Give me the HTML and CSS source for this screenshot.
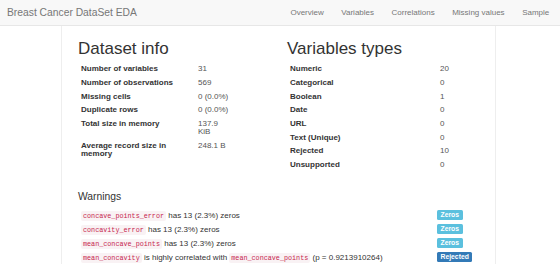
FILE: index.html
```html
<!DOCTYPE html>
<html lang="en">
<head>
    <meta charset="UTF-8">
    <meta name="viewport" content="width=device-width, initial-scale=1.0">
    <title>Breast Cancer DataSet EDA</title>
    <link rel="stylesheet" href="styles.css">
</head>
<body>
    <nav class="navbar">
        <span class="brand">Breast Cancer DataSet EDA</span>
        <ul class="nav-links">
            <li>Overview</li>
            <li>Variables</li>
            <li>Correlations</li>
            <li>Missing values</li>
            <li>Sample</li>
        </ul>
    </nav>

    <div class="container">
        <div class="overview">
            <div class="col">
                <h1>Dataset info</h1>
                <table class="stats info">
                    <tr><th>Number of variables</th><td>31</td></tr>
                    <tr><th>Number of observations</th><td>569</td></tr>
                    <tr><th>Missing cells</th><td>0 (0.0%)</td></tr>
                    <tr><th>Duplicate rows</th><td>0 (0.0%)</td></tr>
                    <tr><th>Total size in memory</th><td>137.9 KiB</td></tr>
                    <tr><th>Average record size in memory</th><td>248.1 B</td></tr>
                </table>
            </div>
            <div class="col">
                <h1>Variables types</h1>
                <table class="stats types">
                    <tr><th>Numeric</th><td>20</td></tr>
                    <tr><th>Categorical</th><td>0</td></tr>
                    <tr><th>Boolean</th><td>1</td></tr>
                    <tr><th>Date</th><td>0</td></tr>
                    <tr><th>URL</th><td>0</td></tr>
                    <tr><th>Text (Unique)</th><td>0</td></tr>
                    <tr><th>Rejected</th><td>10</td></tr>
                    <tr><th>Unsupported</th><td>0</td></tr>
                </table>
            </div>
        </div>

        <h2>Warnings</h2>
        <table class="warnings">
            <col class="msg-col">
            <col class="tag-col">
            <tr>
                <td><code>concave_points_error</code> has 13 (2.3%) zeros</td>
                <td><span class="label label-info">Zeros</span></td>
            </tr>
            <tr>
                <td><code>concavity_error</code> has 13 (2.3%) zeros</td>
                <td><span class="label label-info">Zeros</span></td>
            </tr>
            <tr>
                <td><code>mean_concave_points</code> has 13 (2.3%) zeros</td>
                <td><span class="label label-info">Zeros</span></td>
            </tr>
            <tr>
                <td><code>mean_concavity</code> is highly correlated with <code>mean_concave_points</code> (p = 0.9213910264)</td>
                <td><span class="label label-primary">Rejected</span></td>
            </tr>
        </table>
    </div>
</body>
</html>
```

FILE: styles.css
```css
html {
    overflow: hidden;
}
body {
    margin: 0;
    font-family: "Liberation Sans", Arial, sans-serif;
    color: #333;
    background: white;
}
.navbar {
    display: flex;
    justify-content: space-between;
    align-items: center;
    height: 25px;
    padding: 0 2px 0 7px;
    background: #f8f8f8;
    border-bottom: 1px solid #e7e7e7;
}
.brand {
    font-size: 10.3px;
    color: #777;
}
.nav-links {
    display: flex;
    list-style: none;
    margin: 0;
    padding: 0;
}
.nav-links li {
    padding: 0 8.75px;
    font-size: 8px;
    color: #777;
}
.container {
    width: 409px;
    min-height: 240px;
    margin-left: 61px;
    padding: 0 8px 0 16px;
    border-left: 1px solid #eee;
    border-right: 1px solid #eee;
}
.overview {
    display: grid;
    grid-template-columns: 200px 200px;
    column-gap: 9px;
}
h1 {
    font-size: 17px;
    font-weight: normal;
    line-height: 19px;
    margin: 12.5px 0 5px;
}
.stats {
    border-collapse: collapse;
    table-layout: fixed;
    font-size: 8px;
    line-height: 8px;
}
.stats th,
.stats td {
    padding: 2.85px 3px;
    text-align: left;
    vertical-align: top;
}
.stats th {
    font-weight: bold;
}
.stats td {
    color: #555;
}
.info {
    width: 155px;
}
.info th {
    width: 111px;
}
.types {
    width: 200px;
}
.types th {
    width: 144px;
}
h2 {
    font-size: 10.3px;
    font-weight: normal;
    line-height: 12px;
    margin: 19px 0 5px;
}
.warnings {
    width: 100%;
    border-collapse: collapse;
    table-layout: fixed;
    font-size: 8px;
}
.msg-col {
    width: 356px;
}
.warnings td {
    height: 14px;
    padding: 0 3px;
    white-space: nowrap;
    vertical-align: middle;
}
code {
    font-family: "Liberation Mono", monospace;
    font-size: 6.75px;
    padding: 1px 2px;
    color: #c7254e;
    background: #f9f2f4;
    border-radius: 2px;
}
.label {
    display: inline-block;
    height: 10px;
    line-height: 10px;
    padding: 0 3.5px;
    font-size: 6.8px;
    font-weight: bold;
    color: white;
    border-radius: 1.5px;
}
.label-info {
    background: #5bc0de;
}
.label-primary {
    background: #337ab7;
}
```
